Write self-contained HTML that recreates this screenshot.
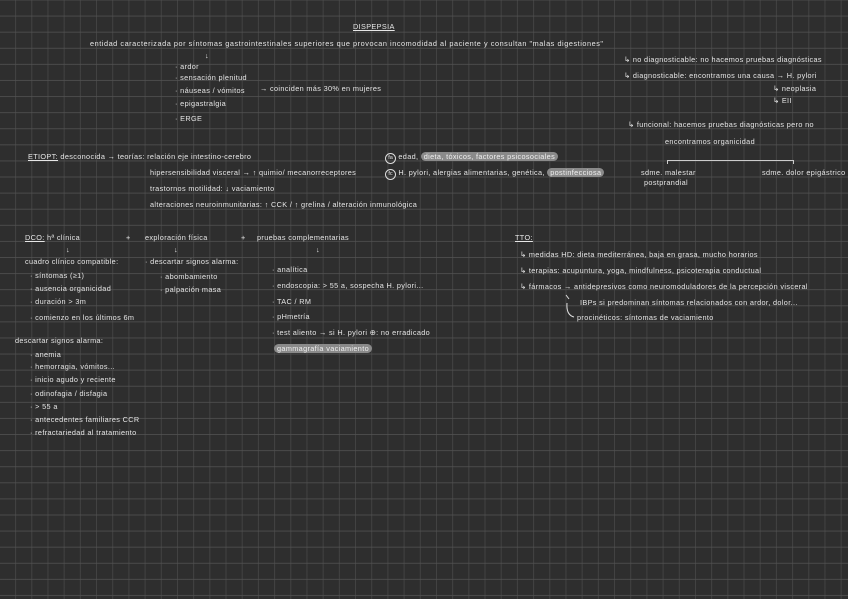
<!DOCTYPE html>
<html><head><meta charset="utf-8"><style>
html,body{margin:0;padding:0}
body{width:848px;height:599px;overflow:hidden;position:relative;background-color:#2e2e2e;
background-image:
linear-gradient(to bottom, rgba(82,82,82,0.8) 1px, transparent 1px),
linear-gradient(to right, rgba(72,72,72,0.8) 1px, transparent 1px);
background-size:100% 16.1px,16.2px 100%;
background-position:0 -0.5px,-1.1px 0;
font-family:"Liberation Sans",sans-serif;}
.t{position:absolute;white-space:nowrap;color:#e6e6e6;font-size:7.3px;line-height:10px;letter-spacing:0.35px}
.u{text-decoration:underline}
.h{background:#8a8a8a;color:#f0f0f0;border-radius:5px;padding:0 3px}
.c{display:inline-block;border:1px solid #ddd;border-radius:50%;width:9px;height:9px;line-height:9px;text-align:center;font-size:5.5px;letter-spacing:0}
</style></head><body>
<div class="t u" style="left:353px;top:22px">DISPEPSIA</div>
<div class="t" style="left:90px;top:39px;letter-spacing:0.55px">entidad caracterizada por síntomas gastrointestinales superiores que provocan incomodidad al paciente y consultan "malas digestiones"</div>
<div class="t" style="left:205px;top:51px">↓</div>
<div class="t" style="left:175px;top:62px">· ardor</div>
<div class="t" style="left:175px;top:73px">· sensación plenitud</div>
<div class="t" style="left:175px;top:86px">· náuseas / vómitos</div>
<div class="t" style="left:175px;top:99px">· epigastralgia</div>
<div class="t" style="left:175px;top:114px">· ERGE</div>
<div class="t" style="left:260px;top:84px">→ coinciden más 30% en mujeres</div>

<div class="t" style="left:624px;top:55px">↳ no diagnosticable: no hacemos pruebas diagnósticas</div>
<div class="t" style="left:624px;top:71px">↳ diagnosticable: encontramos una causa → H. pylori</div>
<div class="t" style="left:773px;top:84px">↳ neoplasia</div>
<div class="t" style="left:773px;top:96px">↳ EII</div>
<div class="t" style="left:628px;top:120px">↳ funcional: hacemos pruebas diagnósticas pero no</div>
<div class="t" style="left:665px;top:137px">encontramos organicidad</div>
<div style="position:absolute;left:667px;top:160px;width:125px;height:3px;border:1px solid #ccc;border-bottom:none"></div>
<div class="t" style="left:641px;top:168px">sdme. malestar</div>
<div class="t" style="left:644px;top:178px">postprandial</div>
<div class="t" style="left:762px;top:168px">sdme. dolor epigástrico</div>

<div class="t" style="left:28px;top:152px"><span class="u">ETIOPT:</span> desconocida → teorías: relación eje intestino-cerebro</div>
<div class="t" style="left:150px;top:168px">hipersensibilidad visceral → ↑ quimio/ mecanorreceptores</div>
<div class="t" style="left:150px;top:184px">trastornos motilidad: ↓ vaciamiento</div>
<div class="t" style="left:150px;top:200px">alteraciones neuroinmunitarias: ↑ CCK / ↑ grelina / alteración inmunológica</div>
<div class="t" style="left:385px;top:152px"><span class="c">fa</span> edad, <span class="h">dieta, tóxicos, factores psicosociales</span></div>
<div class="t" style="left:385px;top:168px"><span class="c">fc</span> H. pylori, alergias alimentarias, genética, <span class="h">postinfecciosa</span></div>

<div class="t" style="left:25px;top:233px"><span class="u">DCO:</span> hª clínica</div>
<div class="t" style="left:126px;top:233px">+</div>
<div class="t" style="left:145px;top:233px">exploración física</div>
<div class="t" style="left:241px;top:233px">+</div>
<div class="t" style="left:257px;top:233px">pruebas complementarias</div>
<div class="t" style="left:66px;top:245px">↓</div>
<div class="t" style="left:174px;top:245px">↓</div>
<div class="t" style="left:316px;top:245px">↓</div>
<div class="t" style="left:25px;top:257px">cuadro clínico compatible:</div>
<div class="t" style="left:30px;top:271px">· síntomas (≥1)</div>
<div class="t" style="left:30px;top:284px">· ausencia organicidad</div>
<div class="t" style="left:30px;top:297px">· duración &gt; 3m</div>
<div class="t" style="left:30px;top:313px">· comienzo en los últimos 6m</div>
<div class="t" style="left:15px;top:336px">descartar signos alarma:</div>
<div class="t" style="left:30px;top:350px">· anemia</div>
<div class="t" style="left:30px;top:362px">· hemorragia, vómitos...</div>
<div class="t" style="left:30px;top:375px">· inicio agudo y reciente</div>
<div class="t" style="left:30px;top:389px">· odinofagia / disfagia</div>
<div class="t" style="left:30px;top:402px">· &gt; 55 a</div>
<div class="t" style="left:30px;top:415px">· antecedentes familiares CCR</div>
<div class="t" style="left:30px;top:428px">· refractariedad al tratamiento</div>
<div class="t" style="left:145px;top:257px">· descartar signos alarma:</div>
<div class="t" style="left:160px;top:272px">· abombamiento</div>
<div class="t" style="left:160px;top:285px">· palpación masa</div>
<div class="t" style="left:272px;top:265px">· analítica</div>
<div class="t" style="left:272px;top:281px">· endoscopia: &gt; 55 a, sospecha H. pylori...</div>
<div class="t" style="left:272px;top:297px">· TAC / RM</div>
<div class="t" style="left:272px;top:312px">· pHmetría</div>
<div class="t" style="left:272px;top:328px">· test aliento → si H. pylori ⊕: no erradicado</div>
<div class="t" style="left:274px;top:344px"><span class="h">gammagrafía vaciamiento</span></div>

<div class="t u" style="left:515px;top:233px">TTO:</div>
<div class="t" style="left:520px;top:250px">↳ medidas HD: dieta mediterránea, baja en grasa, mucho horarios</div>
<div class="t" style="left:520px;top:266px">↳ terapias: acupuntura, yoga, mindfulness, psicoterapia conductual</div>
<div class="t" style="left:520px;top:282px">↳ fármacos → antidepresivos como neuromoduladores de la percepción visceral</div>
<div class="t" style="left:580px;top:298px">IBPs si predominan síntomas relacionados con ardor, dolor...</div>
<div class="t" style="left:577px;top:313px">procinéticos: síntomas de vaciamiento</div>
<svg style="position:absolute;left:562px;top:293px" width="16" height="30"><path d="M4 2 L7 6 M5 10 Q4 22 12 24" stroke="#ddd" fill="none" stroke-width="1"/></svg>
</body></html>
